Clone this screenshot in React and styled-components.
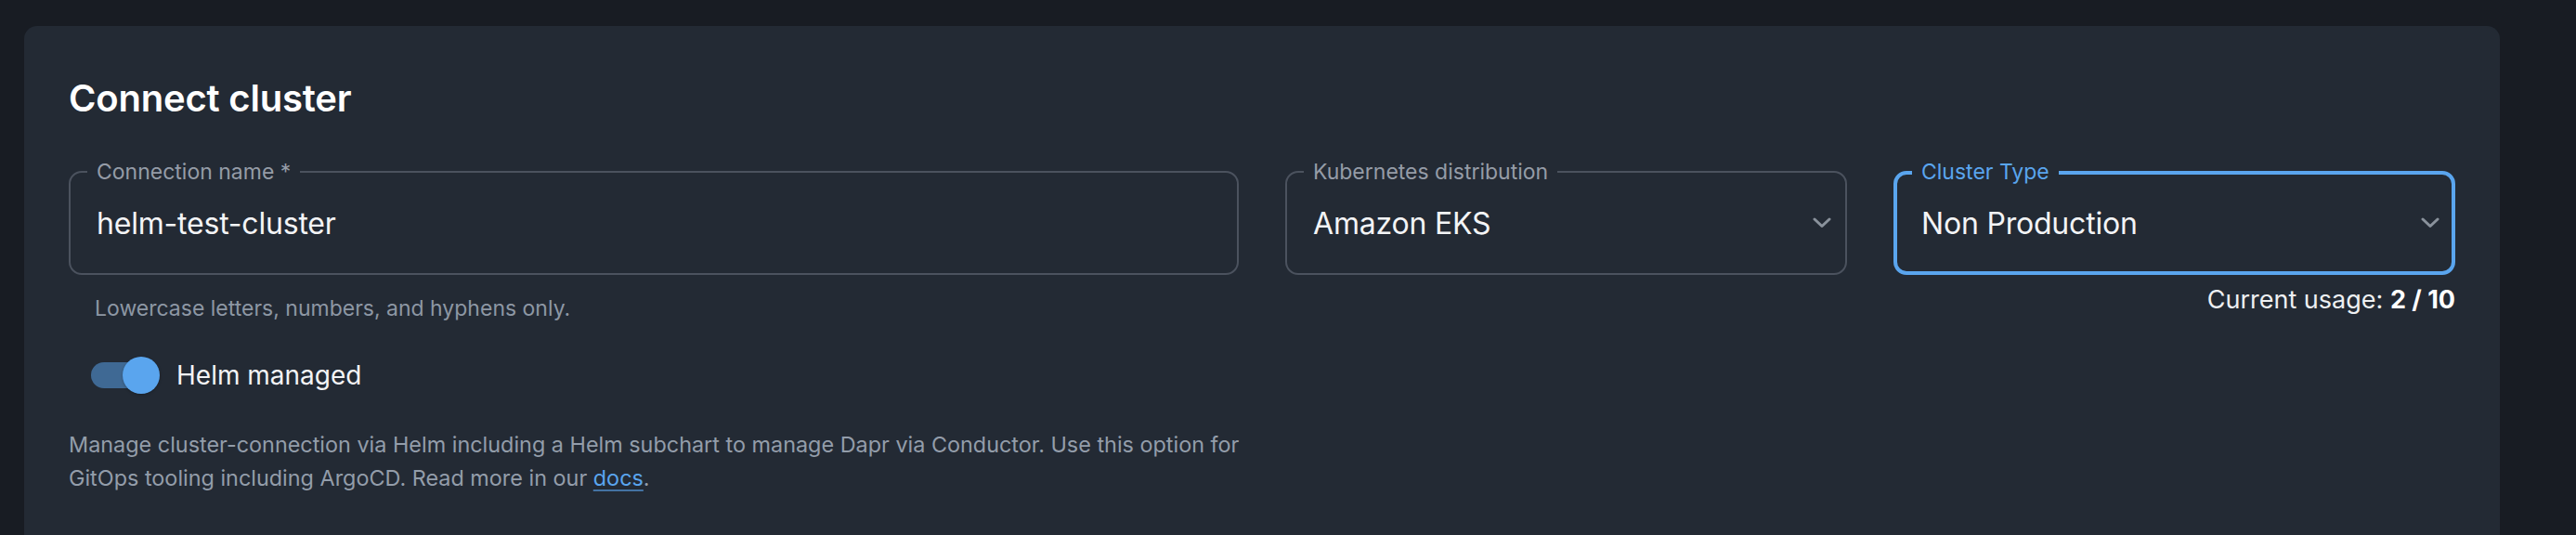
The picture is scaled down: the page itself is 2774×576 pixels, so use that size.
import React from 'react';
import styled, { createGlobalStyle } from 'styled-components';

const GlobalStyle = createGlobalStyle`
  html, body {
    margin: 0;
    padding: 0;
    background: #181c23;
    overflow: hidden;
  }
  body {
    font-family: Inter, "Noto Sans", sans-serif;
    -webkit-font-smoothing: antialiased;
  }
`;

const Page = styled.div`
  padding: 28px 82px 0 26px;
  height: 576px;
  box-sizing: border-box;
`;

const Card = styled.section`
  background: #232a34;
  border-radius: 14px;
  padding: 54px 48px 48px;
  min-height: 640px;
  box-sizing: border-box;
`;

const Title = styled.h2`
  margin: 0 0 54px;
  font-size: 40px;
  line-height: 48px;
  font-weight: 600;
  color: #ffffff;
  letter-spacing: -0.2px;
`;

const FieldGrid = styled.div`
  display: grid;
  grid-template-columns: repeat(12, 1fr);
  column-gap: 50px;
`;

const FieldCell = styled.div`
  grid-column: span ${(p) => p.$span};
  display: flex;
  flex-direction: column;
`;

const Outline = styled.div`
  position: relative;
  height: 112px;
  box-sizing: border-box;
  border: ${(p) => (p.$focused ? '4px solid #5aa5ee' : '2px solid #4b525e')};
  border-radius: 14px;
  display: flex;
  align-items: center;
  padding: 0 ${(p) => (p.$focused ? 26 : 28)}px;
`;

const Label = styled.span`
  position: absolute;
  top: ${(p) => (p.$focused ? -14 : -12)}px;
  left: ${(p) => (p.$focused ? 16 : 18)}px;
  padding: 0 10px;
  background: #232a34;
  font-size: 23px;
  line-height: 23px;
  color: ${(p) => (p.$focused ? '#5aa5ee' : '#959ca7')};
  white-space: nowrap;
`;

const Value = styled.span`
  flex: 1;
  font-size: 32px;
  color: #f3f4f6;
  letter-spacing: -0.2px;
  white-space: nowrap;
`;

const Chevron = styled.svg`
  width: 20px;
  height: 12px;
  flex-shrink: 0;
  margin-right: -13px;
`;

const Helper = styled.div`
  margin-top: 16px;
  padding-left: 28px;
  font-size: 23px;
  line-height: 40px;
  color: #8d97a4;
`;

const Usage = styled.div`
  margin-top: 7px;
  text-align: right;
  font-size: 27px;
  line-height: 40px;
  color: #eef0f2;

  b {
    font-weight: 700;
    color: #ffffff;
  }
`;

const ToggleRow = styled.label`
  display: flex;
  align-items: center;
  height: 40px;
  margin-top: 32px;
  padding-left: 24px;
  gap: 18px;
`;

const Track = styled.span`
  position: relative;
  display: inline-block;
  width: 68px;
  height: 28px;
  border-radius: 14px;
  background: #3f6994;
  margin-right: 6px;
`;

const Thumb = styled.span`
  position: absolute;
  top: -6px;
  right: -6px;
  width: 40px;
  height: 40px;
  border-radius: 50%;
  background: #5aa5ee;
  box-shadow: 0 1px 3px rgba(0, 0, 0, 0.25);
`;

const ToggleText = styled.span`
  font-size: 28px;
  color: #f3f4f6;
`;

const Description = styled.p`
  margin: 37px 0 0;
  font-size: 23.4px;
  line-height: 36px;
  color: #939daa;
  white-space: nowrap;

  a {
    color: #5aa5ee;
    text-decoration: underline;
    text-decoration-color: rgba(90, 165, 238, 0.6);
    text-underline-offset: 4px;
  }
`;

function ChevronDown() {
  return (
    <Chevron viewBox="0 0 20 12" fill="none">
      <path d="M2 2 L10 9.5 L18 2" stroke="#8a929c" strokeWidth="3" strokeLinecap="round" strokeLinejoin="round" />
    </Chevron>
  );
}

function Field({ label, value, select, focused }) {
  return (
    <Outline $focused={focused}>
      <Label $focused={focused}>{label}</Label>
      <Value>{value}</Value>
      {select && <ChevronDown />}
    </Outline>
  );
}

export default function App() {
  return (
    <Page>
      <GlobalStyle />
      <Card>
        <Title>Connect cluster</Title>
        <FieldGrid>
          <FieldCell $span={6}>
            <Field label="Connection name *" value="helm-test-cluster" />
            <Helper>Lowercase letters, numbers, and hyphens only.</Helper>
          </FieldCell>
          <FieldCell $span={3}>
            <Field label="Kubernetes distribution" value="Amazon EKS" select />
          </FieldCell>
          <FieldCell $span={3}>
            <Field label="Cluster Type" value="Non Production" select focused />
            <Usage>
              Current usage: <b>2 / 10</b>
            </Usage>
          </FieldCell>
        </FieldGrid>
        <ToggleRow>
          <Track>
            <Thumb />
          </Track>
          <ToggleText>Helm managed</ToggleText>
        </ToggleRow>
        <Description>
          Manage cluster-connection via Helm including a Helm subchart to manage Dapr via Conductor. Use this option for
          <br />
          GitOps tooling including ArgoCD. Read more in our <a href="#docs">docs</a>.
        </Description>
      </Card>
    </Page>
  );
}
